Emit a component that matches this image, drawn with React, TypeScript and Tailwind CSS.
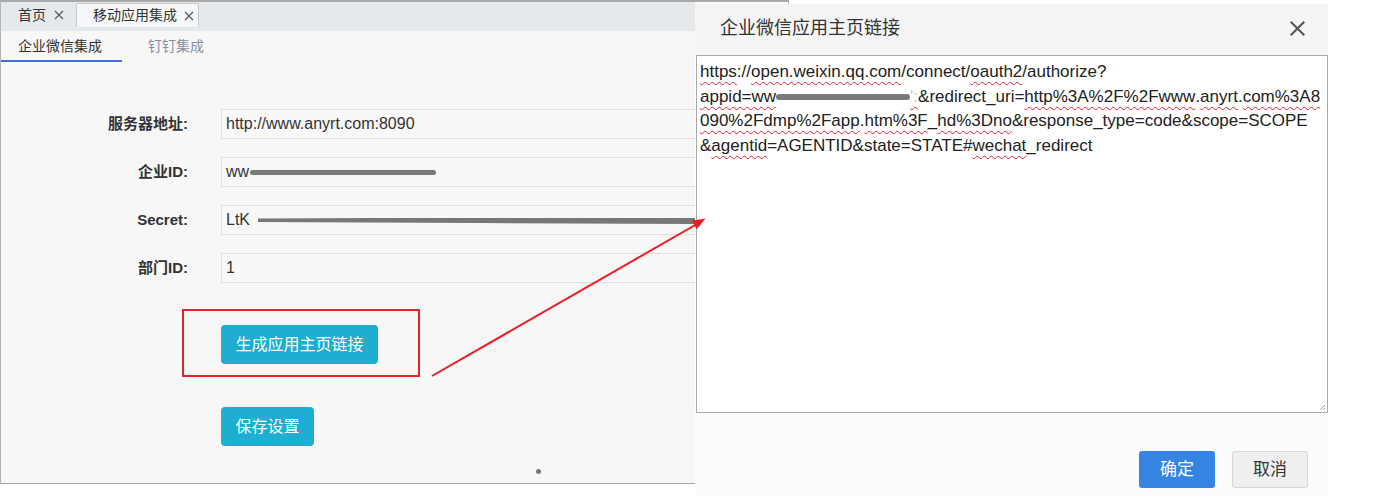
import React from 'react'

// red wavy "spell check" underline
const Sp = ({ children }: { children: React.ReactNode }) => (
    <span className="underline decoration-wavy decoration-[#e3232c] decoration-1 underline-offset-[4px]">{children}</span>
)

const Close = ({ size, color, width }: { size: number, color: string, width: number }) => (
    <svg width={size} height={size} viewBox="0 0 10 10">
        <path d="M1 1 L9 9 M9 1 L1 9" stroke={color} strokeWidth={width} fill="none" />
    </svg>
)

const fields = [
    { label: '服务器地址:', value: 'http://www.anyrt.com:8090' },
    { label: '企业ID:', value: 'ww' },
    { label: 'Secret:', value: 'LtK' },
    { label: '部门ID:', value: '1' },
]

const App = () => {
    return (
        <div className="relative flex w-[1376px] h-[504px] overflow-hidden bg-white font-['Liberation_Sans','Noto_Sans_CJK_SC',sans-serif] text-[#333]">

            {/* left page */}
            <div className="flex flex-col w-[695px] h-[484px] shrink-0 border-t-2 border-l border-b border-t-[#a9a9a9] border-l-[#b5b5b5] border-b-[#a3a3a3] bg-[#f7f7f7]">
                {/* top tabs */}
                <div className="flex items-start h-[29px] bg-[#e6e9ec] pt-[1px]">
                    <div className="flex items-center h-[24px] pl-[17px] w-[75px] text-[14px]">
                        <span>首页</span>
                        <span className="ml-[8px]"><Close size={10} color="#555" width={1.1} /></span>
                    </div>
                    <div className="flex items-center h-[24px] w-[123px] pl-[16px] border border-b-0 border-[#c8c8c8] rounded-t-[2px] bg-[#f6f7f8] text-[14px]">
                        <span>移动应用集成</span>
                        <span className="ml-[7px]"><Close size={10} color="#555" width={1.1} /></span>
                    </div>
                </div>

                {/* sub tabs */}
                <div className="flex items-start h-[32px] text-[14px]">
                    <div className="w-[121px] h-[31px] pl-[17px] leading-[30px] border-b-2 border-[#3c6fd8]">企业微信集成</div>
                    <div className="ml-[26px] leading-[30px] text-[#858fa0]">钉钉集成</div>
                </div>

                {/* form */}
                <div className="flex flex-col gap-[18px] mt-[46px]">
                    {fields.map((f, i) => (
                        <div className="flex items-center h-[30px]" key={i}>
                            <div className="w-[187px] shrink-0 text-right text-[15px] font-bold text-[#333]">{f.label}</div>
                            <div className="flex items-center flex-1 min-w-0 overflow-hidden h-[30px] ml-[33px] pl-[4px] border border-r-0 border-[#dedede] bg-[#f8f8f8] text-[16px] text-[#333]">
                                <span className="shrink-0">{f.value}</span>
                                {i === 1 && <span className="inline-block shrink-0 ml-[1px] w-[186px] h-[5px] rounded-full bg-[#7a7a7a]"></span>}
                                {i === 2 && (
                                    <svg width="440" height="9" className="ml-[8px] shrink-0">
                                        <polygon points="0,2.5 110,2 220,2 440,2 440,8 220,7 110,6.5 0,6" fill="#777" />
                                    </svg>
                                )}
                            </div>
                        </div>
                    ))}
                </div>

                {/* buttons */}
                <div className="mt-[26px] ml-[181px] w-[238px] h-[68px] border-2 border-[#e8222a] pl-[37px] pt-[14px]">
                    <button className="h-[39px] w-[157px] rounded-[4px] bg-[#1fadd1] text-white text-[16px]">生成应用主页链接</button>
                </div>
                <div className="mt-[30px] ml-[220px]">
                    <button className="h-[39px] w-[93px] rounded-[4px] bg-[#1fadd1] text-white text-[16px]">保存设置</button>
                </div>
                <div className="mt-[23px] ml-[535px] w-[5px] h-[5px] rounded-full bg-[#777]"></div>
            </div>

            {/* dialog */}
            <div className="flex flex-col w-[633px] shrink-0">
                <div className="h-[4px]">
                    <div className="w-[94px] h-[4px] border-t-2 border-r border-[#a9a9a9]"></div>
                </div>
                <div className="flex items-center justify-between h-[51px] pl-[25px] pr-[22px] pb-[3px] bg-[#f5f5f5]">
                    <span className="text-[18px] text-[#333]">企业微信应用主页链接</span>
                    <Close size={17} color="#555" width={1.2} />
                </div>
                <div className="relative ml-[1px] h-[358px] border border-[#a9a9a9] bg-white pl-[3px] pt-[4px] text-[17px] leading-[24.5px] text-[#222] whitespace-nowrap">
                    <div><Sp>https</Sp>://<Sp>open.weixin.qq.com</Sp>/connect/<Sp>oauth2</Sp>/authorize?</div>
                    <div className="flex items-center">
                        <Sp>appid=ww<span className="inline-block align-middle w-[134px] h-[6px] bg-[#7a7a7a] rounded-full"></span><span className="text-[#c8c8c8]">':</span></Sp>
                        <span>&amp;redirect_uri=</span><Sp>http%3A%2F%2Fwww</Sp>.<Sp>anyrt</Sp>.<Sp>com%3A8</Sp>
                    </div>
                    <div><Sp>090%2Fdmp%2Fapp</Sp>.<Sp>htm%3F</Sp>_<Sp>hd%3Dno</Sp>&amp;response_type=code&amp;scope=SCOPE</div>
                    <div>&amp;<Sp>agentid</Sp>=AGENTID&amp;state=STATE#<Sp>wechat</Sp>_redirect</div>
                    <svg width="7" height="7" className="absolute right-[1px] bottom-[1px]">
                        <path d="M1 6 L6 1 M4 6 L6 4" stroke="#999" strokeWidth="1" />
                    </svg>
                </div>
                <div className="flex justify-end gap-[17px] h-[83px] pt-[38px] pr-[20px] bg-[#fcfcfc]">
                    <button className="w-[76px] h-[37px] rounded-[3px] bg-[#3584e2] text-white text-[17px]">确定</button>
                    <button className="w-[76px] h-[37px] rounded-[3px] border border-[#d6d6d6] bg-[#efefef] text-[#333] text-[17px]">取消</button>
                </div>
            </div>

            {/* red annotation arrow */}
            <svg className="absolute left-0 top-0 pointer-events-none" width="1376" height="504">
                <line x1="432" y1="376" x2="697" y2="224" stroke="#ea1c24" strokeWidth="2" />
                <polygon points="705.5,218.5 691.7,220.7 696.7,229.3" fill="#ea1c24" />
            </svg>
        </div>
    )
}

export default App
